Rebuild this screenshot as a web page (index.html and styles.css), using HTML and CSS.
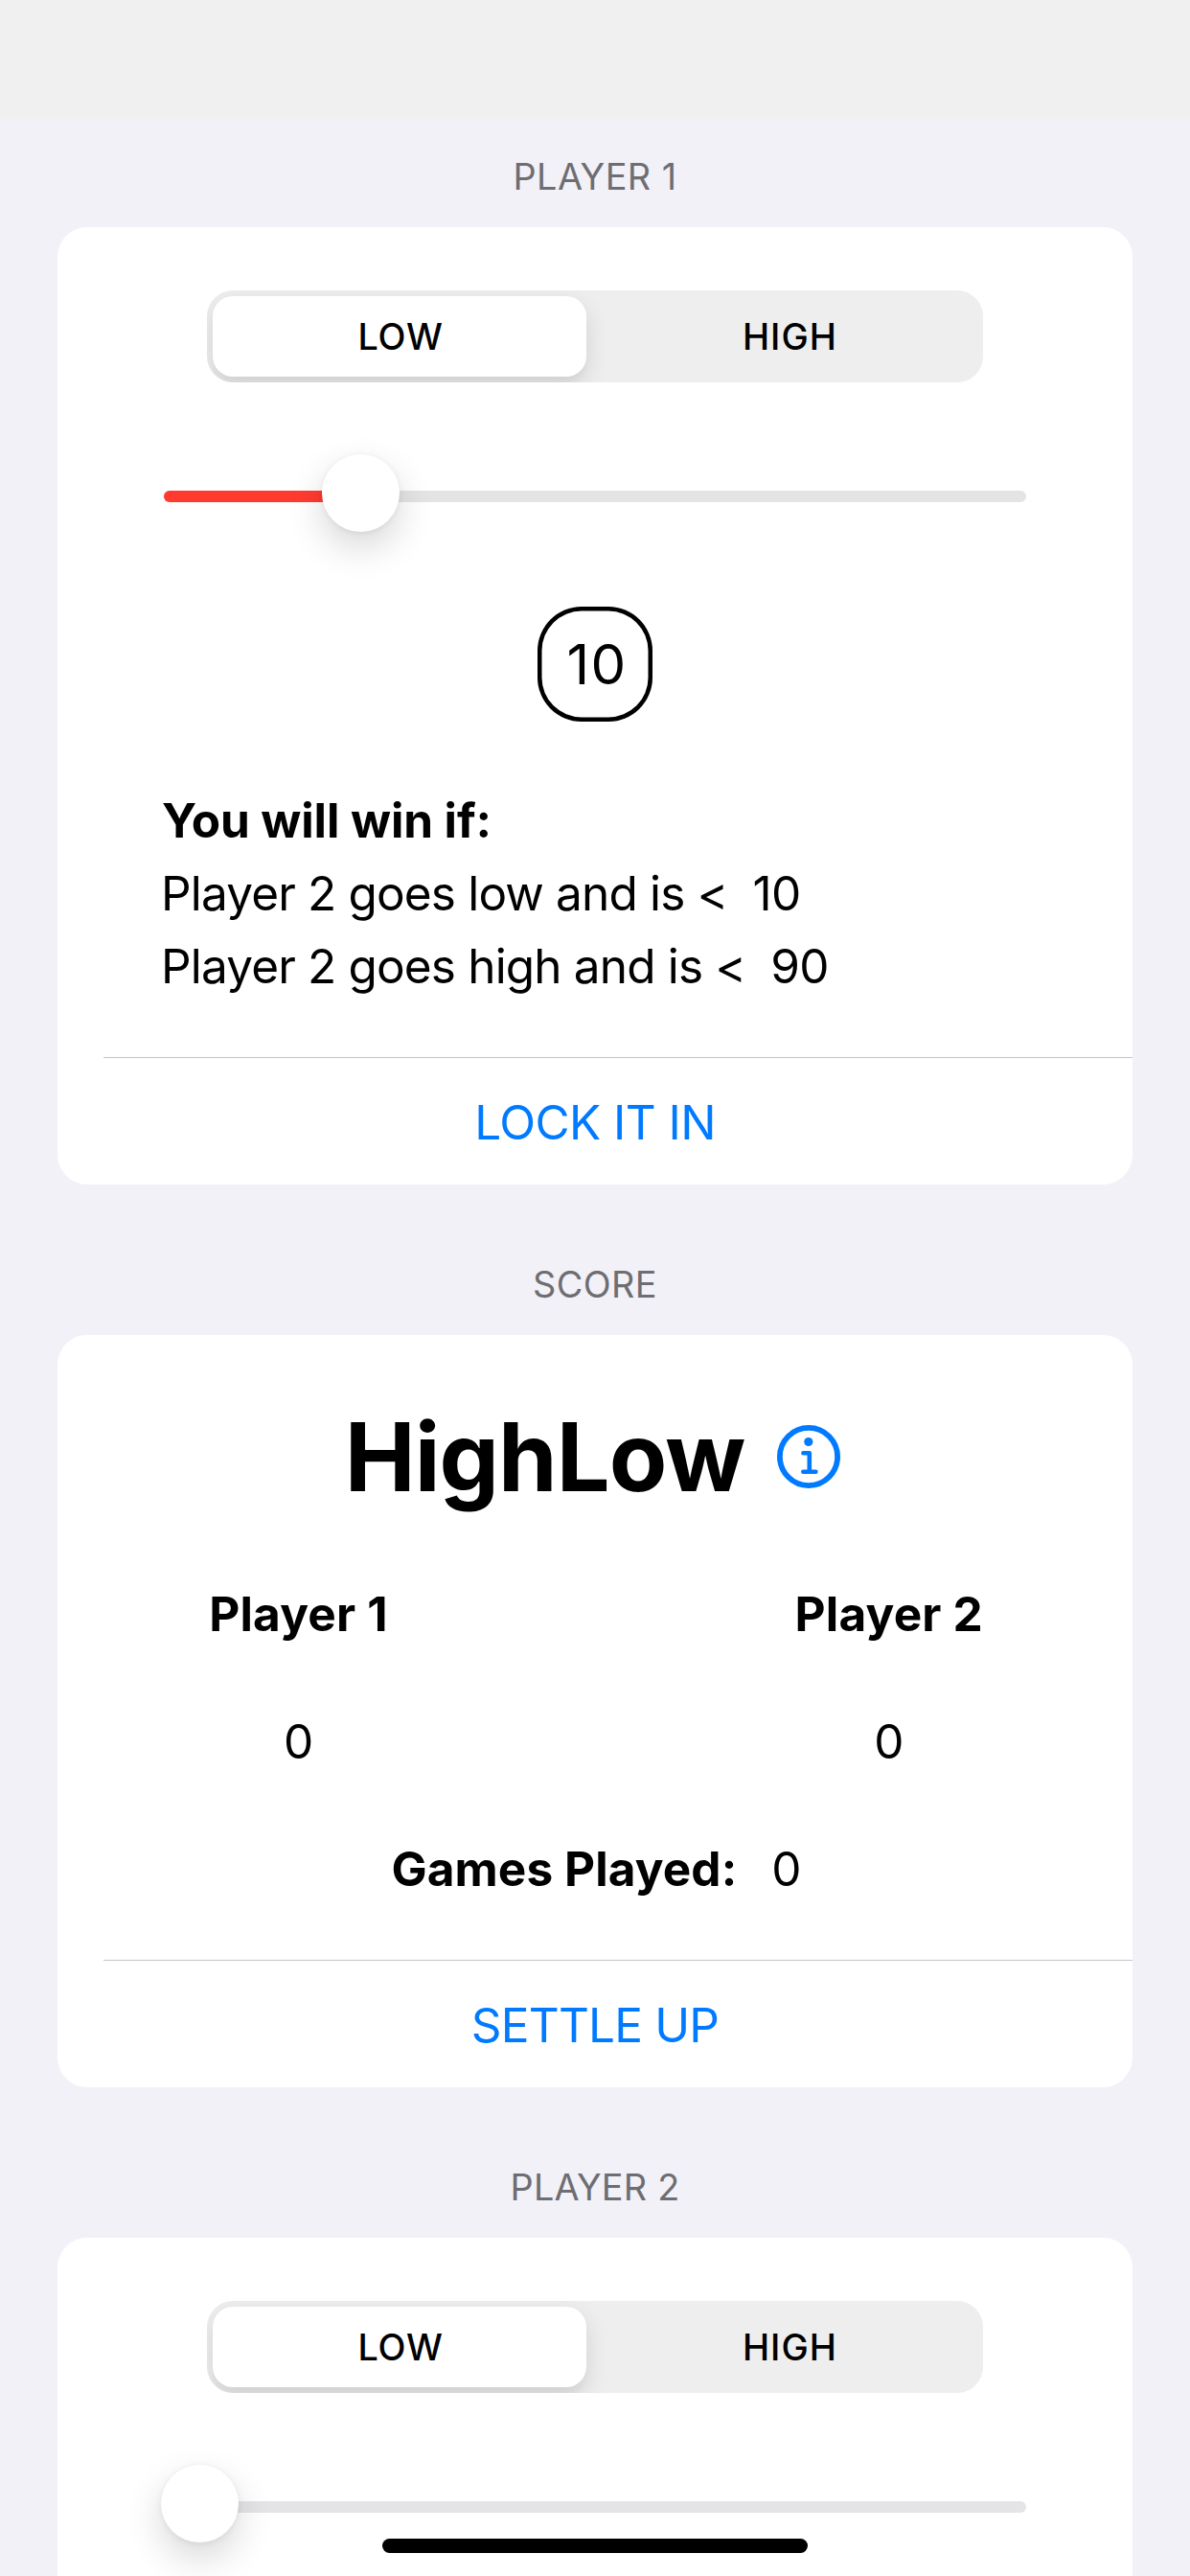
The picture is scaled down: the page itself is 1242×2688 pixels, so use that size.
FILE: index.html
```
<!DOCTYPE html>
<html lang="en">
<head>
<meta charset="utf-8">
<meta name="viewport" content="width=device-width, initial-scale=1">
<title>HighLow</title>
<link rel="stylesheet" href="styles.css">
</head>
<body>
<div class="status-bar"></div>
<main class="form">
  <section class="section section-first">
    <h2 class="section-title">PLAYER 1</h2>
    <div class="card">
      <div class="card-body">
        <div class="segmented">
          <span class="segment segment-selected">LOW</span>
          <span class="segment segment-plain">HIGH</span>
        </div>
        <div class="slider">
          <div class="track"><div class="fill" style="width: 205px"></div></div>
          <div class="thumb" style="margin-left: 168px"></div>
        </div>
        <div class="value-box">10</div>
        <div class="rules">
          <p class="rules-title">You will win if:</p>
          <p class="rule">Player 2 goes low and is &lt;&nbsp; 10</p>
          <p class="rule">Player 2 goes high and is &lt;&nbsp; 90</p>
        </div>
      </div>
      <div class="divider"></div>
      <a class="action action-lock">LOCK IT IN</a>
    </div>
  </section>

  <section class="section">
    <h2 class="section-title">SCORE</h2>
    <div class="card">
      <div class="score">
        <div class="brand">
          <h1 class="brand-name">HighLow</h1>
          <svg class="info" viewBox="0 0 66 66" fill="none" stroke="#007aff" stroke-linecap="round" stroke-linejoin="round">
            <circle cx="33" cy="33" r="30.1" stroke-width="5.8"/>
            <circle cx="32.8" cy="17.5" r="4.6" fill="#007aff" stroke="none"/>
            <path d="M27.4 29.2H33.8V48.6M27.3 48.8H40.4" stroke-width="4.6"/>
          </svg>
        </div>
        <div class="players">
          <div class="player player-one">
            <span class="player-name">Player 1</span>
            <span class="player-score">0</span>
          </div>
          <div class="player player-two">
            <span class="player-name">Player 2</span>
            <span class="player-score">0</span>
          </div>
        </div>
        <div class="games">
          <span class="games-label">Games Played:</span>
          <span>0</span>
        </div>
      </div>
      <div class="divider"></div>
      <a class="action action-settle">SETTLE UP</a>
    </div>
  </section>

  <section class="section">
    <h2 class="section-title section-title-two">PLAYER 2</h2>
    <div class="card card-cut">
      <div class="card-body">
        <div class="segmented">
          <span class="segment segment-selected">LOW</span>
          <span class="segment segment-plain">HIGH</span>
        </div>
        <div class="slider">
          <div class="track"></div>
          <div class="thumb"></div>
        </div>
      </div>
    </div>
  </section>
</main>
<div class="home-indicator"></div>
</body>
</html>
```
FILE: styles.css
```
* { box-sizing: border-box; }

body {
  position: relative;
  display: flex;
  flex-direction: column;
  height: 2688px;
  margin: 0;
  overflow: hidden;
  background: #f2f1f7;
  color: #000;
  font-family: Inter, "Liberation Sans", sans-serif;
  font-size: 49.5px;
}

h1, h2, p { margin: 0; font-weight: 400; }

.status-bar { flex: none; height: 124px; background: #f0f0f0; }

.form { flex: none; display: flex; flex-direction: column; padding: 0 60px; }

.section-title {
  padding: 81px 0 30px;
  color: #6d6d72;
  font-size: 37.8px;
  line-height: 46px;
  letter-spacing: 0.42px;
  text-align: center;
}
.section-title-two { letter-spacing: 0.2px; }
.section-first .section-title { padding-top: 37px; }

.card { display: flex; flex-direction: column; background: #fff; border-radius: 31px; }
.card-cut { height: 353px; border-radius: 31px 31px 0 0; }

.card-body { display: flex; flex-direction: column; padding: 66px 108px 57px; }

.segmented {
  display: grid;
  grid-template-columns: 390px 1fr;
  height: 96px;
  margin: 0 48px;
  padding: 6px;
  overflow: hidden;
  background: #eee;
  border-radius: 27px;
}
.segment {
  font-size: 37.8px;
  line-height: 84px;
  text-align: center;
}
.segment-selected {
  padding-left: 2px;
  background: #fff;
  border-radius: 21px;
  box-shadow: 0 9px 24px rgba(0, 0, 0, 0.12), 0 9px 3px rgba(0, 0, 0, 0.02);
  font-weight: 500;
  letter-spacing: 0.77px;
}
.segment-plain { padding-left: 17px; font-weight: 500; letter-spacing: 1.1px; }

.slider { display: grid; align-items: center; height: 81px; margin-top: 75px; }
.track, .thumb { grid-area: 1 / 1; }
.track {
  height: 12px;
  margin: 7px 3px 0;
  overflow: hidden;
  background: #e4e4e6;
  border-radius: 6px;
}
.fill { height: 12px; background: #ff3b30; }
.thumb {
  position: relative;
  width: 81px;
  height: 81px;
  background: #fff;
  border-radius: 50%;
  box-shadow: 0 1px 6px rgba(0, 0, 0, 0.07), 0 16px 38px rgba(0, 0, 0, 0.16);
}

.value-box {
  align-self: center;
  width: 120px;
  height: 120px;
  margin-top: 78px;
  padding-left: 4px;
  border-radius: 46px;
  box-shadow: inset 0 0 0 4.5px #000;
  font-size: 58.2px;
  line-height: 120px;
  letter-spacing: 1.3px;
  text-align: center;
}

.rules { margin-top: 65px; line-height: 76px; }
.rules-title { padding-left: 1px; font-weight: 700; letter-spacing: -0.09px; }
.rule { letter-spacing: -0.84px; }

.divider { height: 1px; margin-left: 48px; background: #c6c6c8; }

.action {
  height: 132px;
  padding-top: 1px;
  color: #007aff;
  line-height: 132px;
  text-align: center;
}
.action-lock { letter-spacing: -0.58px; }
.action-settle { letter-spacing: -0.8px; }

.score { display: flex; flex-direction: column; padding: 67px 156px 65px; }

.brand {
  display: flex;
  justify-content: center;
  align-items: center;
  gap: 34px;
  padding-right: 5px;
}
.brand-name {
  font-size: 98.9px;
  font-weight: 700;
  line-height: 120px;
  letter-spacing: -0.91px;
}
.info { width: 66px; height: 66px; }

.players { display: flex; justify-content: space-between; margin-top: 74px; }
.player {
  display: flex;
  flex-direction: column;
  gap: 73px;
  line-height: 60px;
  text-align: center;
  white-space: nowrap;
}
.player-one { width: 191px; }
.player-name { font-weight: 700; letter-spacing: 0.2px; }

.games {
  display: flex;
  justify-content: center;
  gap: 36px;
  margin-top: 73px;
  padding-left: 3px;
  line-height: 60px;
}
.games-label { font-weight: 700; letter-spacing: 0.1px; }

.home-indicator {
  position: absolute;
  bottom: 24px;
  left: 399px;
  width: 444px;
  height: 15px;
  background: #000;
  border-radius: 8px;
}
```
